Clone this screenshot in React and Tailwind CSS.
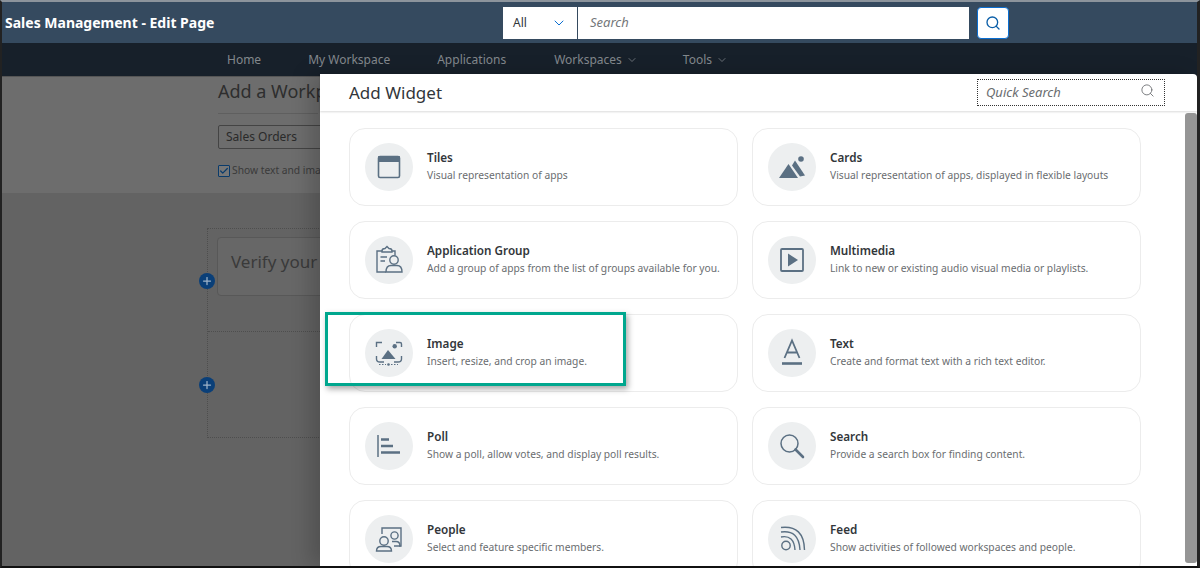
import React from 'react';
import { ChevronDown, Search, Plus, Check } from 'lucide-react';

const font = "font-['Noto_Sans','Open_Sans',sans-serif]";

const ICON = '#5b7083';

function TilesIcon() {
    return (
        <svg viewBox="0 0 48 48" className="w-12 h-12">
            <rect x="13.5" y="13.5" width="21" height="21" rx="1.5" fill="none" stroke={ICON} strokeWidth="1.6" />
            <rect x="13" y="13" width="22" height="6" rx="1" fill={ICON} />
        </svg>
    );
}

function CardsIcon() {
    return (
        <svg viewBox="0 0 48 48" className="w-12 h-12">
            <circle cx="33" cy="16" r="2.8" fill={ICON} />
            <path d="M11 35 L20.5 21 L30 35 Z" fill={ICON} />
            <path d="M24 22.5 L27 17.5 L37 32.5 L32 33.5 Z" fill={ICON} />
        </svg>
    );
}

function GroupIcon() {
    return (
        <svg viewBox="0 0 48 48" className="w-12 h-12" fill="none" stroke={ICON} strokeWidth="1.4">
            <path d="M21 36 H12 V15 H17 M27 15 H30 V19" />
            <path d="M17 15 Q17 12.5 20 12.5 L22 10.5 L24 12.5 Q27 12.5 27 15 V16 H17 Z" />
            <path d="M15.5 21 H22 M15.5 25 H20" />
            <circle cx="29" cy="24" r="4.2" />
            <path d="M21 36 Q21 29.5 26 29.5 H32 Q37 29.5 37 36 Z" />
        </svg>
    );
}

function MediaIcon() {
    return (
        <svg viewBox="0 0 48 48" className="w-12 h-12">
            <rect x="13" y="13" width="22" height="22" rx="1" fill="none" stroke={ICON} strokeWidth="1.8" />
            <path d="M20 17.5 L30 24 L20 30.5 Z" fill={ICON} />
        </svg>
    );
}

function ImageIcon() {
    return (
        <svg viewBox="0 0 48 48" className="w-12 h-12">
            <g fill="none" stroke={ICON} strokeWidth="1.4">
                <path d="M11.5 18 V13.5 H17 M31 13.5 H35 Q36.5 13.5 36.5 15 V18" />
                <path d="M11.5 27 V30 Q11.5 33 15 33 H19 M29 33 H33 Q36.5 33 36.5 30 V27" />
            </g>
            <circle cx="29.7" cy="17.3" r="2.2" fill={ICON} />
            <path d="M16.5 30 L23 21 L30.5 30 Z" fill={ICON} />
            <circle cx="23.5" cy="35.5" r="1.3" fill={ICON} />
            <path d="M14 35.5 H21 M26 35.5 H33" stroke={ICON} strokeWidth="1.1" strokeDasharray="1.5 1.5" />
        </svg>
    );
}

function TextIcon() {
    return (
        <svg viewBox="0 0 48 48" className="w-12 h-12" fill="none" stroke={ICON}>
            <path d="M16.5 29 L24 11.5 L31.5 29 M19 23.5 H29" strokeWidth="1.8" />
            <path d="M14 34.5 H34" strokeWidth="2.6" />
        </svg>
    );
}

function PollIcon() {
    return (
        <svg viewBox="0 0 48 48" className="w-12 h-12" fill="none" stroke={ICON}>
            <path d="M13 13 V35" strokeWidth="1.5" />
            <path d="M16 17.5 H24 M16 24 H28 M16 30.5 H35" strokeWidth="2.6" />
        </svg>
    );
}

function SearchIcon() {
    return (
        <svg viewBox="0 0 48 48" className="w-12 h-12" fill="none" stroke={ICON}>
            <circle cx="21.5" cy="21.5" r="8.5" strokeWidth="1.5" />
            <path d="M27.5 27.5 L35 35" strokeWidth="2.6" strokeLinecap="round" />
        </svg>
    );
}

function PeopleIcon() {
    return (
        <svg viewBox="0 0 48 48" className="w-12 h-12" fill="none" stroke={ICON} strokeWidth="1.4">
            <path d="M17 19 V13 H36 V31 H34" />
            <circle cx="19" cy="26" r="4.2" />
            <path d="M11.5 36 Q11.5 31.5 16 31.5 H22 Q26.5 31.5 26.5 36 Z" />
            <circle cx="29.5" cy="20.5" r="3.6" />
            <path d="M27 26.5 H31 Q35 26.5 35 31 H29" />
        </svg>
    );
}

function FeedIcon() {
    return (
        <svg viewBox="0 0 48 48" className="w-12 h-12" fill="none" stroke={ICON} strokeWidth="1.4">
            <circle cx="18" cy="30.5" r="4.2" />
            <path d="M13 22 Q26 19.5 27 35" />
            <path d="M13 17 Q31 14.5 32 35" />
            <path d="M13 12.5 Q36 10 36.5 35" />
        </svg>
    );
}

const widgets = [
    { title: 'Tiles', desc: 'Visual representation of apps', Icon: TilesIcon },
    { title: 'Cards', desc: 'Visual representation of apps, displayed in flexible layouts', Icon: CardsIcon },
    { title: 'Application Group', desc: 'Add a group of apps from the list of groups available for you.', Icon: GroupIcon },
    { title: 'Multimedia', desc: 'Link to new or existing audio visual media or playlists.', Icon: MediaIcon },
    { title: 'Image', desc: 'Insert, resize, and crop an image.', Icon: ImageIcon },
    { title: 'Text', desc: 'Create and format text with a rich text editor.', Icon: TextIcon },
    { title: 'Poll', desc: 'Show a poll, allow votes, and display poll results.', Icon: PollIcon },
    { title: 'Search', desc: 'Provide a search box for finding content.', Icon: SearchIcon },
    { title: 'People', desc: 'Select and feature specific members.', Icon: PeopleIcon },
    { title: 'Feed', desc: 'Show activities of followed workspaces and people.', Icon: FeedIcon },
];

function WidgetCard({ title, desc, Icon }) {
    return (
        <div className="h-[78px] border border-[#ececec] rounded-[16px] bg-white flex items-center pl-[15px]">
            <div className="w-12 h-12 rounded-full bg-[#edeff0] shrink-0">
                <Icon />
            </div>
            <div className="ml-[14px] pb-[3px]">
                <div className="text-[11.7px] leading-[14px] font-semibold text-[#32363a]">{title}</div>
                <div className="text-[10.25px] leading-[14px] mt-[4px] text-[#6a6d70] whitespace-nowrap">{desc}</div>
            </div>
        </div>
    );
}

export default function App() {
    return (
        <div className={`${font} w-[1200px] h-[568px] relative overflow-hidden bg-[#636363] border-l-2 border-r-[3px] border-b-2 border-t-2 border-l-[#222] border-r-[#222] border-b-[#111] border-t-[#8c949c]`}>
            {/* Shell bar */}
            <div className="h-[41px] bg-[#354a5f] flex items-center relative">
                <div className="pl-[3px] text-[14px] font-bold text-white">Sales Management - Edit Page</div>
                <div className="absolute left-[501px] top-[5px] flex h-[32px]">
                    <div className="w-[74px] bg-white flex items-center justify-between pl-[10px] pr-[10px] text-[12px] text-[#32363a]">
                        All
                        <ChevronDown className="w-[16px] h-[16px] text-[#0a6ed1]" strokeWidth={1.5} />
                    </div>
                    <div className="ml-px w-[391px] bg-white flex items-center pl-[12px] text-[13px] italic text-[#74777a]">Search</div>
                    <div className="ml-[8px] w-[32px] bg-white border border-[#0a6ed1] rounded-[4px] flex items-center justify-center">
                        <Search className="w-[16px] h-[16px] text-[#0a5ea8]" strokeWidth={2} />
                    </div>
                </div>
            </div>

            {/* Nav bar, dimmed by the dialog backdrop */}
            <div className="h-[33px] bg-[#17202a] flex items-center pl-[225px] gap-[47px] text-[12px] text-[#83888d]">
                <span>Home</span>
                <span>My Workspace</span>
                <span>Applications</span>
                <span className="flex items-center gap-[4px] ml-px">Workspaces <ChevronDown className="w-[12px] h-[12px]" strokeWidth={1.5} /></span>
                <span className="flex items-center gap-[4px] -ml-[2px]">Tools <ChevronDown className="w-[12px] h-[12px]" strokeWidth={1.5} /></span>
            </div>

            {/* Page behind the dialog */}
            <div className="h-[117px] bg-[#6d6d6d] pl-[216px] pt-[2px] border-t border-[#555]">
                <div className="text-[18px] leading-[24px] text-[#2e2e2e]">Add a Workpage</div>
                <div className="mt-[10px] h-px w-[100px] bg-[#5f5f5f]" />
                <div className="mt-[11px] w-[200px] h-[24px] border border-[#444] rounded-[2px] flex items-center pl-[7px] text-[12px] text-[#2a2a2a]">Sales Orders</div>
                <div className="mt-[14px] flex items-center gap-[2px] text-[10.25px] text-[#3a3a3a]">
                    <span className="w-[12px] h-[12px] border border-[#0a3b6b] bg-[#777] flex items-center justify-center rounded-[1px]">
                        <Check className="w-[10px] h-[10px] text-[#0a3b6b]" strokeWidth={3} />
                    </span>
                    Show text and images
                </div>
            </div>
            <div className="pl-[205px] pt-[35px]">
                <div className="w-[200px] h-[210px] border border-dotted border-[#4e4e4e] pl-[9px] pt-[8px]">
                    <div className="w-[180px] h-[59px] border border-[#585858] rounded-[4px] bg-[#676767] flex items-start pt-[11px] pl-[13px] text-[17px] text-[#3a3a3a] whitespace-nowrap overflow-hidden">Verify your site</div>
                    <div className="mt-[35px] -ml-[9px] h-px border-t border-dotted border-[#4e4e4e]" />
                </div>
            </div>
            <span className="absolute left-[197px] top-[271px] w-[16px] h-[16px] rounded-full bg-[#0a3f78] flex items-center justify-center">
                <Plus className="w-[12px] h-[12px] text-[#9fb4c8]" strokeWidth={2.5} />
            </span>
            <span className="absolute left-[197px] top-[375px] w-[16px] h-[16px] rounded-full bg-[#0a3f78] flex items-center justify-center">
                <Plus className="w-[12px] h-[12px] text-[#9fb4c8]" strokeWidth={2.5} />
            </span>

            {/* Add Widget dialog */}
            <div className="absolute left-[318px] top-[72px] right-0 bottom-0 bg-white rounded-tr-[4px] shadow-[-10px_0_20px_rgba(0,0,0,0.18)] flex flex-col">
                <div className="h-[37px] shrink-0 flex items-center justify-between pl-[29px] pr-[32px] shadow-[0_1px_2px_rgba(0,0,0,0.15)]">
                    <div className="text-[17px] text-[#32363a]">Add Widget</div>
                    <div className="w-[188px] h-[27px] border border-dotted border-[#333] flex items-center justify-between pl-[8px] pr-[9px] text-[13px] italic text-[#6a6d70]">
                        Quick Search
                        <Search className="w-[15px] h-[15px] text-[#6a6d70] -mt-[4px]" strokeWidth={1.4} />
                    </div>
                </div>
                <div className="flex-1 relative overflow-hidden pl-[29px] pt-[17px]">
                    <div className="grid grid-cols-[389px_389px] gap-x-[14px] gap-y-[15px]">
                        {widgets.map((w) => (
                            <WidgetCard key={w.title} {...w} />
                        ))}
                    </div>
                    <div className="absolute right-0 top-[2px] bottom-[3px] w-[12px] rounded-[3px] bg-[#959595]" />
                </div>
            </div>

            {/* Green callout around the Image widget */}
            <div className="absolute left-[323px] top-[310px] w-[301px] h-[74px] border-[3px] border-[#00a78e] shadow-[2px_3px_6px_rgba(0,0,0,0.35)]" />
        </div>
    );
}
